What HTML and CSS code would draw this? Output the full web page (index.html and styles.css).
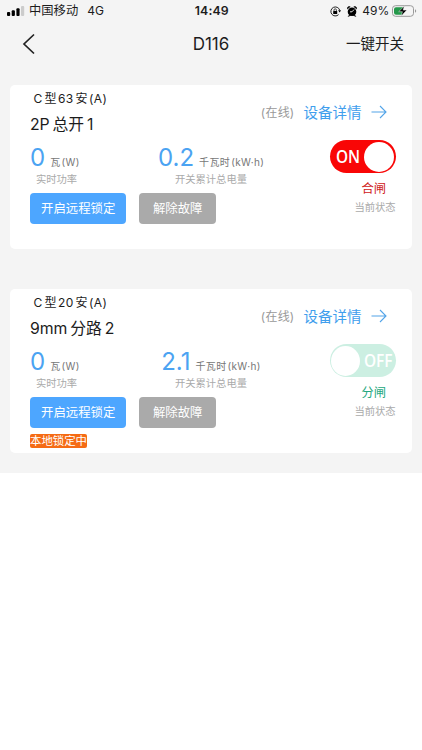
FILE: index.html
```html
<!DOCTYPE html>
<html lang="zh-CN">
<head>
<meta charset="utf-8">
<meta name="viewport" content="width=device-width, initial-scale=1">
<title>D116</title>
<link rel="stylesheet" href="styles.css">
</head>
<body>
<div class="page">
  <header class="statusbar">
    <div class="carrier">
      <svg class="signal" width="18" height="10" viewBox="0 0 18 10"><rect x="0" y="6" width="3.2" height="4" rx="1"/><rect x="4.7" y="4.3" width="3.2" height="5.7" rx="1"/><rect x="9.4" y="2.2" width="3.2" height="7.8" rx="1"/><rect class="weak" x="14" y="0" width="3.2" height="10" rx="1"/></svg>
      <span class="operator">中国移动</span><span class="network">4G</span>
    </div>
    <time class="clock">14:49</time>
    <div class="indicators">
      <svg width="11" height="11" viewBox="0 0 11 11"><path d="M8.6 8.6A4.5 4.5 0 1 1 9.7 4.2" fill="none" stroke="#222" stroke-width="1"/><path d="M8.1 4.3h2.9L9.7 6.4z"/><rect x="3.2" y="4.9" width="4" height="3" rx=".5"/><path d="M4 5V4a1.2 1.2 0 0 1 2.4 0v1" fill="none" stroke="#222" stroke-width=".8"/></svg>
      <svg class="alarm" width="10" height="11" viewBox="0 0 10 11"><circle cx="5" cy="5.8" r="4.3"/><path d="M.3 3A2 2 0 0 1 3.2.7zM9.7 3A2 2 0 0 0 6.8.7zM1.2 10.5l1.6-2 1 .8zM8.8 10.5l-1.6-2-1 .8z" stroke="#111" stroke-width=".6"/><path d="M5 5.8l2-2.2M5 5.8H3" stroke="#f4f4f4" stroke-width=".9" fill="none"/></svg>
      <span class="percent">49%</span>
      <svg class="battery" width="25" height="12" viewBox="0 0 25 12"><rect x=".5" y=".7" width="21" height="10.6" rx="3" fill="none" stroke="#999"/><path d="M4 2.2h7v7.6H4A2 2 0 0 1 2 7.8V4.2a2 2 0 0 1 2-2z" fill="#24984a"/><path d="M23 4.2c1.6.6 1.6 3 0 3.6z" fill="#999"/><path d="M12.4 1L6.7 6.7h3.7L9.2 11l5.7-5.9h-3.7z" stroke="#f4f4f4" stroke-width=".5"/></svg>
    </div>
  </header>

  <nav class="navbar">
    <svg class="back" width="14" height="22" viewBox="0 0 14 22"><path d="M12 1.5L2 11l10 9.5" fill="none" stroke="#222" stroke-width="1.7"/></svg>
    <h1 class="title">D116</h1>
    <a class="action">一键开关</a>
  </nav>

  <main class="devices">
    <section class="card">
      <div class="head">
        <div class="identity">
          <div class="model">C<span class="cjk">型</span>63<span class="cjk">安</span>(A)</div>
          <h2 class="name">2P<span class="cjk">总开</span>1</h2>
        </div>
        <div class="links">
          <span class="online">(在线)</span><a class="detail">设备详情</a>
          <svg width="16" height="14" viewBox="0 0 16 14"><path d="M.5 7h14M9 1l6 6-6 6" fill="none" stroke="#52a4e8" stroke-width="1.1"/></svg>
        </div>
      </div>
      <div class="content">
        <div class="main">
          <div class="metrics">
            <div class="metric power"><div class="reading"><b>0</b><span class="unit">瓦<i>(W)</i></span></div><div class="label">实时功率</div></div>
            <div class="metric energy"><div class="reading"><b>0.2</b><span class="unit">千瓦时<i>(kW·h)</i></span></div><div class="label">开关累计总电量</div></div>
          </div>
          <div class="buttons"><button class="lock">开启远程锁定</button><button class="clear">解除故障</button></div>
        </div>
        <div class="state">
          <div class="toggle on"><span>ON</span><i class="knob"></i></div>
          <div class="position closed">合闸</div>
          <div class="caption">当前状态</div>
        </div>
      </div>
    </section>

    <section class="card">
      <div class="head">
        <div class="identity">
          <div class="model">C<span class="cjk">型</span>20<span class="cjk">安</span>(A)</div>
          <h2 class="name">9mm<span class="cjk">分路</span>2</h2>
        </div>
        <div class="links">
          <span class="online">(在线)</span><a class="detail">设备详情</a>
          <svg width="16" height="14" viewBox="0 0 16 14"><path d="M.5 7h14M9 1l6 6-6 6" fill="none" stroke="#52a4e8" stroke-width="1.1"/></svg>
        </div>
      </div>
      <div class="content">
        <div class="main">
          <div class="metrics">
            <div class="metric power"><div class="reading"><b>0</b><span class="unit">瓦<i>(W)</i></span></div><div class="label">实时功率</div></div>
            <div class="metric energy"><div class="reading"><b>2.1</b><span class="unit">千瓦时<i>(kW·h)</i></span></div><div class="label">开关累计总电量</div></div>
          </div>
          <div class="buttons"><button class="lock">开启远程锁定</button><button class="clear">解除故障</button></div>
          <div class="tag">本地锁定中</div>
        </div>
        <div class="state">
          <div class="toggle off"><i class="knob"></i><span>OFF</span></div>
          <div class="position open">分闸</div>
          <div class="caption">当前状态</div>
        </div>
      </div>
    </section>
  </main>
</div>
</body>
</html>
```
FILE: styles.css
```css
* { box-sizing: border-box; }
body { margin: 0; background: #fff; color: #1c1c1c; font-family: Inter, "Noto Sans CJK SC", sans-serif; white-space: nowrap; }
h1, h2 { margin: 0; font-weight: 400; }
i { font-style: normal; }
svg { display: block; flex: none; }
.page { height: 472.5px; background: #f4f4f4; }

.statusbar { display: grid; grid-template-columns: 1fr auto 1fr; align-items: center; height: 22px; padding: 0 5.5px 0 7px; font-size: 12px; line-height: 22px; }
.carrier, .indicators { display: flex; align-items: center; }
.signal .weak { fill: #ccc; }
.operator { margin-left: 4px; font-size: 12.3px; }
.network { margin-left: 9px; }
.clock { font-size: 12.3px; font-weight: 600; letter-spacing: .15px; }
.indicators { justify-content: flex-end; }
.alarm { margin-left: 6px; }
.percent { margin: 0 2px 0 5px; letter-spacing: .1px; }

.navbar { display: grid; grid-template-columns: 1fr auto 1fr; align-items: center; height: 43px; padding: 0 18px; }
.back { margin-left: 4px; }
.title { font-size: 17px; line-height: 24px; }
.action { justify-self: end; font-size: 14.5px; line-height: 24px; }

.devices { display: flex; flex-direction: column; gap: 39.5px; padding: 19.7px 10.4px 0; }
.card { height: 164.5px; padding: 4.4px 16px 0 19.6px; background: #fff; border-radius: 5px; }
.head { display: flex; justify-content: space-between; height: 51.2px; }
.model { height: 20px; padding-left: 3.5px; font-size: 12px; line-height: 20px; letter-spacing: .35px; }
.model .cjk { margin: 0 1.3px 0 1.8px; }
.name { height: 28px; margin-top: 2px; font-size: 15.8px; line-height: 28px; }
.name .cjk { margin: 0 2.8px; }
.links { display: flex; align-items: center; height: 45px; padding-right: 8.2px; }
.online { color: #999; font-size: 12px; letter-spacing: .2px; }
.detail { margin: 0 10px 0 9px; color: #409eed; font-size: 14.5px; }

.content { display: flex; justify-content: space-between; }
.metrics { display: flex; }
.power { width: 128px; }
.energy { width: 106px; text-align: center; }
.reading { height: 31px; padding-top: 1.5px; line-height: 32px; }
.reading b { color: #4ba3f2; font-size: 24px; font-weight: 400; }
.unit { margin-left: 5px; color: #777; font-size: 10px; letter-spacing: .35px; }
.unit i { margin-left: 1px; }
.label { height: 16px; color: #aaa; font-size: 10.3px; line-height: 16px; }
.power .label { padding-left: 6px; }
.buttons { display: flex; gap: 13px; margin-top: 6px; }
button { height: 31px; padding: 1px 0 0; border: 0; border-radius: 4px; color: #fff; font: 12.4px/30px Inter, "Noto Sans CJK SC", sans-serif; }
.lock { width: 96.5px; background: #4da6ff; }
.clear { width: 76.5px; background: #aaa; }
.tag { width: 57.5px; height: 14.5px; margin-top: 5.5px; background: #f56b14; border-radius: 2px; color: #fff; font-size: 11.4px; line-height: 14.5px; }

.state { display: flex; flex-direction: column; align-items: flex-end; }
.toggle { display: flex; align-items: center; justify-content: space-between; width: 66px; height: 33px; border-radius: 17px; color: #fff; font: 600 17.5px/33px "Open Sans", sans-serif; }
.toggle span { transform: scaleX(.88); }
.knob { width: 30px; height: 30px; border-radius: 50%; background: #fff; }
.on { padding: 0 1.5px 0 6px; background: #f90606; }
.on span { transform-origin: 0 50%; }
.off { padding: 0 3px 0 1.5px; background: #ccefe2; }
.off span { transform-origin: 100% 50%; }
.position { height: 20px; margin: 6px 9.5px 0 0; font-size: 12.3px; line-height: 20px; }
.closed { color: #cf2020; }
.open { color: #24a880; }
.caption { height: 17px; color: #aaa; font-size: 10.3px; line-height: 17px; }
```
